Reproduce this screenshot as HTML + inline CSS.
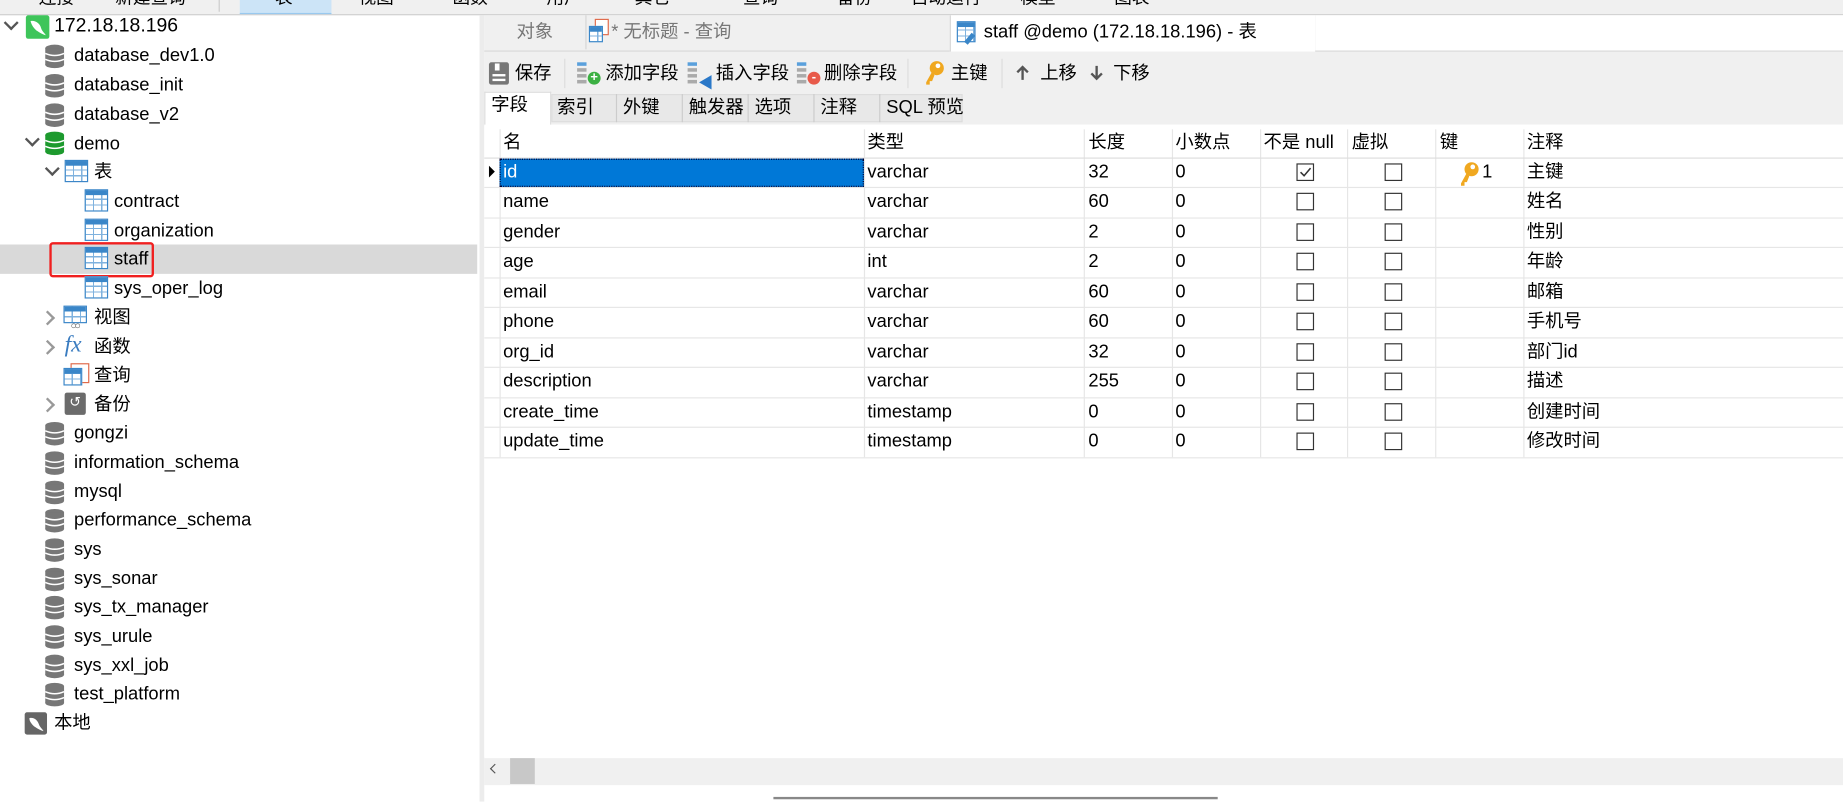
<!DOCTYPE html>
<html><head><meta charset="utf-8"><style>
html,body{margin:0;padding:0;width:1843px;height:801px;overflow:hidden;background:#fff}
#w{position:absolute;left:0;top:0;width:1568px;height:682px;transform:scale(1.17538);transform-origin:0 0;font-family:"Liberation Sans","Noto Sans CJK SC",sans-serif;font-size:15.6px;color:#000}
.a{position:absolute;white-space:nowrap}
.row{position:absolute;height:25px;line-height:25px}
.db{position:absolute;width:19px;height:22px}
.chev{position:absolute;width:7px;height:7px;border-right:2px solid #555;border-bottom:2px solid #555}
.tb{position:absolute;width:20px;height:19px;border:1px solid #3a86c8;background:
linear-gradient(#3a86c8,#3a86c8) 0 0/100% 4px no-repeat,
repeating-linear-gradient(90deg,transparent 0 6px,#7fb2de 6px 7px),
repeating-linear-gradient(0deg,transparent 0 4px,#7fb2de 4px 5px);background-color:#fff;box-sizing:border-box}
.hl{position:absolute;left:412px;width:1156px;height:1px;background:#e6e6e6}
.vl{position:absolute;top:110px;width:1px;height:279px;background:#e6e6e6}
.cb{position:absolute;width:15px;height:15px;border:1px solid #333;box-sizing:border-box;background:#fff}
.cell{position:absolute;line-height:25px;height:25px}
</style></head><body><div id="w">
<div class="a" style="left:0;top:0;width:1568px;height:12px;background:#f0f0f0;border-bottom:1px solid #d0d0d0"></div>
<div class="a" style="left:204px;top:0;width:78px;height:11px;background:#cce4f7;border-bottom:1px solid #99c9ef"></div>
<div class="a" style="left:0;top:-9px;font-size:15px;color:#000;line-height:15px">
<span style="position:absolute;left:33px">连接</span><span style="position:absolute;left:98px">新建查询</span><span style="position:absolute;left:234px">表</span><span style="position:absolute;left:305px">视图</span><span style="position:absolute;left:385px">函数</span><span style="position:absolute;left:465px">用户</span><span style="position:absolute;left:540px">其它</span><span style="position:absolute;left:632px">查询</span><span style="position:absolute;left:712px">备份</span><span style="position:absolute;left:775px">自动运行</span><span style="position:absolute;left:868px">模型</span><span style="position:absolute;left:948px">图表</span></div>
<div class="a" style="left:186px;top:0;width:1px;height:10px;background:#ccc"></div>

<div class="a" style="left:408px;top:13px;width:4px;height:669px;background:#ececec"></div>
<div class="a" style="left:0;top:208px;width:406px;height:25px;background:#d9d9d9"></div>
<div class="a" style="left:42px;top:206px;width:85px;height:26px;border:2px solid #f02020;border-radius:3px"></div>

<div class="chev" style="left:5px;top:15px;transform:rotate(45deg)"></div>
<div class="a" style="left:22px;top:13px;width:20px;height:20px;background:#3ec55a;border-radius:2px"><svg width="20" height="20"><path d="M4 5 C8 4 12 7 13 11 C14 14 16 15 17 17 C13 16 11 14 9 13 C7 11 5 9 4 5Z" fill="#fff"/></svg></div>
<div class="row" style="left:46px;top:10px;font-size:16.5px">172.18.18.196</div>

<svg width="0" height="0" style="position:absolute"><defs>
<g id="dbg"><ellipse cx="9" cy="4" rx="8" ry="3" fill="#777"/><rect x="1" y="4" width="16" height="14" fill="#777"/><ellipse cx="9" cy="18" rx="8" ry="3" fill="#777"/><path d="M1 8.5 Q9 12 17 8.5 M1 13.5 Q9 17 17 13.5" stroke="#fff" stroke-width="1.3" fill="none"/></g>
<g id="dbgr"><ellipse cx="9" cy="4" rx="8" ry="3" fill="#1d9a2e"/><rect x="1" y="4" width="16" height="14" fill="#1d9a2e"/><ellipse cx="9" cy="18" rx="8" ry="3" fill="#1d9a2e"/><path d="M1 8.5 Q9 12 17 8.5 M1 13.5 Q9 17 17 13.5" stroke="#fff" stroke-width="1.3" fill="none"/></g>
</defs></svg>
<svg class="db" style="left:37px;top:37px" viewBox="0 0 18 22"><use href="#dbg"/></svg><div class="row" style="left:63px;top:35px">database_dev1.0</div>
<svg class="db" style="left:37px;top:62px" viewBox="0 0 18 22"><use href="#dbg"/></svg><div class="row" style="left:63px;top:60px">database_init</div>
<svg class="db" style="left:37px;top:87px" viewBox="0 0 18 22"><use href="#dbg"/></svg><div class="row" style="left:63px;top:85px">database_v2</div>
<div class="chev" style="left:23px;top:114px;transform:rotate(45deg)"></div>
<svg class="db" style="left:37px;top:111px" viewBox="0 0 18 22"><use href="#dbgr"/></svg><div class="row" style="left:63px;top:110px">demo</div>
<div class="chev" style="left:40px;top:139px;transform:rotate(45deg)"></div>
<div class="tb" style="left:55px;top:136px"></div><div class="row" style="left:80px;top:134px">表</div>
<div class="tb" style="left:72px;top:161px"></div><div class="row" style="left:97px;top:159px">contract</div>
<div class="tb" style="left:72px;top:186px"></div><div class="row" style="left:97px;top:184px">organization</div>
<div class="tb" style="left:72px;top:210px"></div><div class="row" style="left:97px;top:208px">staff</div>
<div class="tb" style="left:72px;top:235px"></div><div class="row" style="left:97px;top:233px">sys_oper_log</div>
<div class="chev" style="left:36px;top:266px;transform:rotate(-45deg);border-color:#999"></div>
<div class="tb" style="left:54px;top:260px;height:15px"></div><div class="a" style="left:60px;top:272px;font-size:9px;color:#555;letter-spacing:-2px">○○</div><div class="row" style="left:80px;top:258px">视图</div>
<div class="chev" style="left:36px;top:291px;transform:rotate(-45deg);border-color:#999"></div>
<div class="a" style="left:55px;top:282px;font-family:'Liberation Serif',serif;font-style:italic;font-size:20px;color:#3a7cc0">fx</div><div class="row" style="left:80px;top:283px">函数</div>
<div class="a" style="left:60px;top:309px;width:14px;height:15px;border:1px solid #e06a4a;background:#fff"></div><div class="tb" style="left:54px;top:313px;width:16px;height:15px"></div><div class="row" style="left:80px;top:307px">查询</div>
<div class="chev" style="left:36px;top:340px;transform:rotate(-45deg);border-color:#999"></div>
<div class="a" style="left:55px;top:334px;width:18px;height:19px;background:#6b6b6b;border-radius:2px;color:#fff;font-size:12px;text-align:center;line-height:17px">↺</div><div class="row" style="left:80px;top:332px">备份</div>
<svg class="db" style="left:37px;top:358px" viewBox="0 0 18 22"><use href="#dbg"/></svg><div class="row" style="left:63px;top:356px">gongzi</div>
<svg class="db" style="left:37px;top:383px" viewBox="0 0 18 22"><use href="#dbg"/></svg><div class="row" style="left:63px;top:381px">information_schema</div>
<svg class="db" style="left:37px;top:408px" viewBox="0 0 18 22"><use href="#dbg"/></svg><div class="row" style="left:63px;top:406px">mysql</div>
<svg class="db" style="left:37px;top:432px" viewBox="0 0 18 22"><use href="#dbg"/></svg><div class="row" style="left:63px;top:430px">performance_schema</div>
<svg class="db" style="left:37px;top:457px" viewBox="0 0 18 22"><use href="#dbg"/></svg><div class="row" style="left:63px;top:455px">sys</div>
<svg class="db" style="left:37px;top:482px" viewBox="0 0 18 22"><use href="#dbg"/></svg><div class="row" style="left:63px;top:480px">sys_sonar</div>
<svg class="db" style="left:37px;top:506px" viewBox="0 0 18 22"><use href="#dbg"/></svg><div class="row" style="left:63px;top:504px">sys_tx_manager</div>
<svg class="db" style="left:37px;top:531px" viewBox="0 0 18 22"><use href="#dbg"/></svg><div class="row" style="left:63px;top:529px">sys_urule</div>
<svg class="db" style="left:37px;top:556px" viewBox="0 0 18 22"><use href="#dbg"/></svg><div class="row" style="left:63px;top:554px">sys_xxl_job</div>
<svg class="db" style="left:37px;top:580px" viewBox="0 0 18 22"><use href="#dbg"/></svg><div class="row" style="left:63px;top:578px">test_platform</div>
<div class="a" style="left:21px;top:606px;width:19px;height:19px;background:#666;border-radius:2px"><svg width="19" height="19"><path d="M4 5 C8 4 11 7 12 10 C13 13 15 14 16 16 C12 15 10 13 8 12 C6 10 4 8 4 5Z" fill="#fff"/></svg></div><div class="row" style="left:46px;top:603px">本地</div>

<div class="a" style="left:412px;top:13px;width:1156px;height:30px;background:#f0f0f0;border-bottom:1px solid #d6d6d6"></div>
<div class="a" style="left:412px;top:13px;width:86px;height:29px;line-height:29px;text-align:center;color:#777">对象</div>
<div class="a" style="left:498px;top:13px;width:1px;height:29px;background:#d6d6d6"></div>
<div class="a" style="left:506px;top:16px;width:10px;height:12px;border:1px solid #e06a4a;background:#fff"></div><div class="tb" style="left:501px;top:22px;width:12px;height:14px"></div>
<div class="a" style="left:520px;top:13px;line-height:29px;color:#777">* 无标题 - 查询</div>
<div class="a" style="left:808px;top:13px;width:310px;height:31px;background:#fff;border-left:1px solid #d6d6d6;border-right:1px solid #d6d6d6"></div>
<div class="tb" style="left:814px;top:18px;width:16px;height:18px"></div><div class="a" style="left:823px;top:28px;width:4px;height:10px;background:#3a86c8;transform:rotate(40deg)"></div>
<div class="a" style="left:837px;top:13px;line-height:29px">staff @demo (172.18.18.196) - 表</div>
<div class="a" style="left:1119px;top:13px;width:449px;height:30px;background:#fff;border-bottom:1px solid #d6d6d6"></div>

<div class="a" style="left:412px;top:44px;width:1156px;height:62px;background:#f0f0f0"></div>
<div class="a" style="left:416px;top:53px;width:17px;height:19px;background:#777;border-radius:2px"><div style="position:absolute;left:5px;top:1px;width:4px;height:6px;background:#fff"></div><div style="position:absolute;left:3px;top:10px;width:11px;height:2px;background:#fff"></div><div style="position:absolute;left:3px;top:14px;width:11px;height:2px;background:#fff"></div></div>
<div class="a" style="left:438px;top:50px;line-height:25px">保存</div>
<div class="a" style="left:480px;top:50px;width:1px;height:25px;background:#ddd"></div>
<div class="a" style="left:491px;top:53px;width:8px;height:3px;background:#5aa0dc;box-shadow:0 5px 0 #aaa,0 10px 0 #aaa,0 15px 0 #aaa"></div><div class="a" style="left:500px;top:61px;width:11px;height:11px;border-radius:50%;background:#3cb043;color:#fff;font-size:11px;line-height:11px;text-align:center;font-weight:bold">+</div>
<div class="a" style="left:515px;top:50px;line-height:25px">添加字段</div>
<div class="a" style="left:585px;top:53px;width:8px;height:3px;background:#5aa0dc;box-shadow:0 5px 0 #aaa,0 10px 0 #aaa,0 15px 0 #aaa"></div><div class="a" style="left:594px;top:60px;color:#2a78c8;font-size:13px">◀</div>
<div class="a" style="left:609px;top:50px;line-height:25px">插入字段</div>
<div class="a" style="left:678px;top:53px;width:8px;height:3px;background:#5aa0dc;box-shadow:0 5px 0 #aaa,0 10px 0 #aaa,0 15px 0 #aaa"></div><div class="a" style="left:687px;top:61px;width:11px;height:11px;border-radius:50%;background:#e85a4a;color:#fff;font-size:11px;line-height:10px;text-align:center;font-weight:bold">-</div>
<div class="a" style="left:701px;top:50px;line-height:25px">删除字段</div>
<div class="a" style="left:772px;top:50px;width:1px;height:25px;background:#ddd"></div>
<svg class="a" style="left:785px;top:51px" width="20" height="22"><circle cx="12" cy="7" r="6" fill="#f0a820"/><circle cx="13" cy="5" r="2" fill="#fff"/><path d="M8 10 L3 19 L3 21 L6 21 L6 18 L8 18 L10 13Z" fill="#f0a820"/></svg>
<div class="a" style="left:809px;top:50px;line-height:25px">主键</div>
<div class="a" style="left:852px;top:50px;width:1px;height:25px;background:#ddd"></div>
<svg class="a" style="left:864px;top:55px" width="12" height="14"><path d="M6 13 V2 M1.5 6.5 L6 2 L10.5 6.5" stroke="#555" stroke-width="2" fill="none"/></svg><div class="a" style="left:885px;top:50px;line-height:25px">上移</div>
<svg class="a" style="left:927px;top:55px" width="12" height="14"><path d="M6 1 V12 M1.5 7.5 L6 12 L10.5 7.5" stroke="#555" stroke-width="2" fill="none"/></svg><div class="a" style="left:947px;top:50px;line-height:25px">下移</div>

<div class="a" style="left:412px;top:78px;width:57px;height:29px;background:#fff;border:1px solid #ddd;border-bottom:none;box-sizing:border-box"></div>
<div class="a" style="left:418px;top:78px;line-height:24px">字段</div>
<div class="a" style="left:469px;top:80px;width:350px;height:24px;background:#e8e8e8;border:1px solid #ddd;box-sizing:border-box"></div>
<div class="a" style="left:474px;top:80px;line-height:24px">索引</div><div class="a" style="left:524px;top:80px;width:1px;height:24px;background:#ccc"></div>
<div class="a" style="left:530px;top:80px;line-height:24px">外键</div><div class="a" style="left:580px;top:80px;width:1px;height:24px;background:#ccc"></div>
<div class="a" style="left:586px;top:80px;line-height:24px">触发器</div><div class="a" style="left:636px;top:80px;width:1px;height:24px;background:#ccc"></div>
<div class="a" style="left:642px;top:80px;line-height:24px">选项</div><div class="a" style="left:692px;top:80px;width:1px;height:24px;background:#ccc"></div>
<div class="a" style="left:698px;top:80px;line-height:24px">注释</div><div class="a" style="left:748px;top:80px;width:1px;height:24px;background:#ccc"></div>
<div class="a" style="left:754px;top:80px;line-height:24px">SQL 预览</div>

<div class="a" style="left:412px;top:106px;width:1156px;height:538px;background:#fff"></div>
<div class="vl" style="left:425px"></div><div class="vl" style="left:735px"></div><div class="vl" style="left:922px"></div><div class="vl" style="left:997px"></div><div class="vl" style="left:1072px"></div><div class="vl" style="left:1146px"></div><div class="vl" style="left:1221px"></div><div class="vl" style="left:1296px"></div>
<div class="hl" style="top:134px;background:#ddd"></div>
<div class="hl" style="top:159px"></div><div class="hl" style="top:185px"></div><div class="hl" style="top:210px"></div><div class="hl" style="top:236px"></div><div class="hl" style="top:261px"></div><div class="hl" style="top:287px"></div><div class="hl" style="top:312px"></div><div class="hl" style="top:338px"></div><div class="hl" style="top:363px"></div><div class="hl" style="top:389px"></div>
<div class="cell" style="top:109px;left:428px">名</div><div class="cell" style="top:109px;left:738px">类型</div><div class="cell" style="top:109px;left:926px">长度</div><div class="cell" style="top:109px;left:1000px">小数点</div><div class="cell" style="top:109px;left:1075px">不是 null</div><div class="cell" style="top:109px;left:1150px">虚拟</div><div class="cell" style="top:109px;left:1225px">键</div><div class="cell" style="top:109px;left:1299px">注释</div>
<div class="a" style="left:425px;top:135px;width:310px;height:24px;background:#0078d7;outline:1px dotted #003;outline-offset:-1px"></div>
<div class="a" style="left:416px;top:141px;width:0;height:0;border-left:5px solid #000;border-top:5px solid transparent;border-bottom:5px solid transparent"></div>
<div class="cell" style="top:134px;left:428px;color:#fff">id</div>
<div class="cell" style="top:159px;left:428px">name</div><div class="cell" style="top:185px;left:428px">gender</div><div class="cell" style="top:210px;left:428px">age</div><div class="cell" style="top:236px;left:428px">email</div><div class="cell" style="top:261px;left:428px">phone</div><div class="cell" style="top:287px;left:428px">org_id</div><div class="cell" style="top:312px;left:428px">description</div><div class="cell" style="top:338px;left:428px">create_time</div><div class="cell" style="top:363px;left:428px">update_time</div>
<div class="cell" style="top:134px;left:738px">varchar</div><div class="cell" style="top:159px;left:738px">varchar</div><div class="cell" style="top:185px;left:738px">varchar</div><div class="cell" style="top:210px;left:738px">int</div><div class="cell" style="top:236px;left:738px">varchar</div><div class="cell" style="top:261px;left:738px">varchar</div><div class="cell" style="top:287px;left:738px">varchar</div><div class="cell" style="top:312px;left:738px">varchar</div><div class="cell" style="top:338px;left:738px">timestamp</div><div class="cell" style="top:363px;left:738px">timestamp</div>
<div class="cell" style="top:134px;left:926px">32</div><div class="cell" style="top:159px;left:926px">60</div><div class="cell" style="top:185px;left:926px">2</div><div class="cell" style="top:210px;left:926px">2</div><div class="cell" style="top:236px;left:926px">60</div><div class="cell" style="top:261px;left:926px">60</div><div class="cell" style="top:287px;left:926px">32</div><div class="cell" style="top:312px;left:926px">255</div><div class="cell" style="top:338px;left:926px">0</div><div class="cell" style="top:363px;left:926px">0</div>
<div class="cell" style="top:134px;left:1000px">0</div><div class="cell" style="top:159px;left:1000px">0</div><div class="cell" style="top:185px;left:1000px">0</div><div class="cell" style="top:210px;left:1000px">0</div><div class="cell" style="top:236px;left:1000px">0</div><div class="cell" style="top:261px;left:1000px">0</div><div class="cell" style="top:287px;left:1000px">0</div><div class="cell" style="top:312px;left:1000px">0</div><div class="cell" style="top:338px;left:1000px">0</div><div class="cell" style="top:363px;left:1000px">0</div>
<div class="cb" style="left:1103px;top:139px"><svg width="13" height="13" style="position:absolute;left:0;top:0"><path d="M2.5 6.5 L5.5 9.5 L11 3" stroke="#333" stroke-width="1.3" fill="none"/></svg></div>
<div class="cb" style="left:1103px;top:164px"></div><div class="cb" style="left:1103px;top:190px"></div><div class="cb" style="left:1103px;top:215px"></div><div class="cb" style="left:1103px;top:241px"></div><div class="cb" style="left:1103px;top:266px"></div><div class="cb" style="left:1103px;top:292px"></div><div class="cb" style="left:1103px;top:317px"></div><div class="cb" style="left:1103px;top:343px"></div><div class="cb" style="left:1103px;top:368px"></div>
<div class="cb" style="left:1178px;top:139px"></div><div class="cb" style="left:1178px;top:164px"></div><div class="cb" style="left:1178px;top:190px"></div><div class="cb" style="left:1178px;top:215px"></div><div class="cb" style="left:1178px;top:241px"></div><div class="cb" style="left:1178px;top:266px"></div><div class="cb" style="left:1178px;top:292px"></div><div class="cb" style="left:1178px;top:317px"></div><div class="cb" style="left:1178px;top:343px"></div><div class="cb" style="left:1178px;top:368px"></div>
<svg class="a" style="left:1240px;top:137px" width="20" height="22"><circle cx="12" cy="7" r="6" fill="#f0a820"/><circle cx="13" cy="5" r="2" fill="#fff"/><path d="M8 10 L3 19 L3 21 L6 21 L6 18 L8 18 L10 13Z" fill="#f0a820"/></svg>
<div class="cell" style="top:134px;left:1261px">1</div>
<div class="cell" style="top:134px;left:1299px">主键</div><div class="cell" style="top:159px;left:1299px">姓名</div><div class="cell" style="top:185px;left:1299px">性别</div><div class="cell" style="top:210px;left:1299px">年龄</div><div class="cell" style="top:236px;left:1299px">邮箱</div><div class="cell" style="top:261px;left:1299px">手机号</div><div class="cell" style="top:287px;left:1299px">部门id</div><div class="cell" style="top:312px;left:1299px">描述</div><div class="cell" style="top:338px;left:1299px">创建时间</div><div class="cell" style="top:363px;left:1299px">修改时间</div>

<div class="a" style="left:412px;top:645px;width:1156px;height:23px;background:#f0f0f0"></div>
<div class="a" style="left:434px;top:645px;width:21px;height:22px;background:#c8c8c8"></div>
<div class="a" style="left:418px;top:651px;width:5px;height:5px;border-left:1.5px solid #555;border-bottom:1.5px solid #555;transform:rotate(45deg)"></div>
<div class="a" style="left:658px;top:678px;width:378px;height:2px;background:#888"></div>
</div></body></html>
